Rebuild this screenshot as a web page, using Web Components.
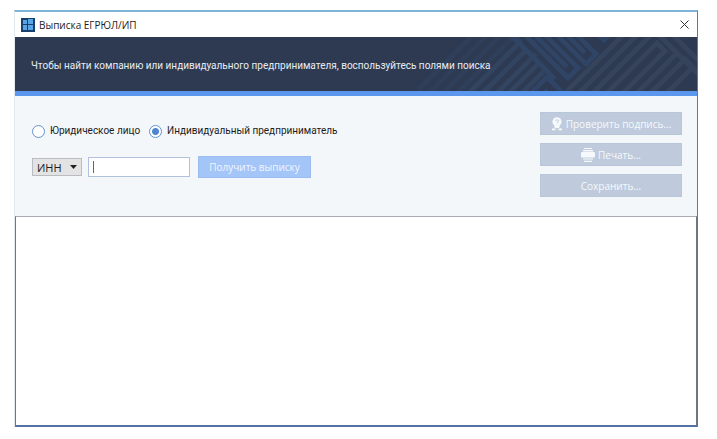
<!DOCTYPE html>
<html lang="ru">
<head>
<meta charset="utf-8">
<title>Выписка ЕГРЮЛ/ИП</title>
<style>
  body {
    margin: 0;
    padding: 10px 19px 12px 14px;
    box-sizing: border-box;
    height: 100vh;
    background: #fff;
    color: #1c1c1c;
    font: 10px/14px Roboto, "Open Sans", sans-serif;
  }
</style>
</head>
<body>
<app-window caption="Выписка ЕГРЮЛ/ИП">
  <hint-banner>Чтобы найти компанию или индивидуального предпринимателя, воспользуйтесь полями поиска</hint-banner>
  <search-panel>
    <action-button slot="actions" icon="seal">Проверить подпись...</action-button>
    <action-button slot="actions" icon="printer">Печать...</action-button>
    <action-button slot="actions">Сохранить...</action-button>
  </search-panel>
  <result-view></result-view>
</app-window>

<script>
(function () {
  const icons = {
    seal: `
      <svg width="12" height="14" viewBox="0 0 12 14" fill="#f6f9fc" aria-hidden="true">
        <circle cx="6" cy="4.8" r="4.6"/>
        <path d="M2.8 8.4h6.4L8 11H4z"/>
        <path d="M1 11.4h3.8l-.6 1.8H1zM7.2 11.4H11v1.8H7.8z"/>
        <path d="M4.4 3.6q1.6-1.6 2.9-.2.6 1.2-1.3 2.6" fill="none" stroke="#bfcbdc"/>
      </svg>`,
    printer: `
      <svg width="14" height="14" viewBox="0 0 14 14" fill="#f6f9fc" aria-hidden="true">
        <path d="M3 0h8v1H3zM2 2h10v1.4H2z"/>
        <rect y="4" width="14" height="5.6" rx="1"/>
        <path d="M2 10.4h10v1.2H2zM3 12.8h8V14H3z"/>
      </svg>`,
  };

  class AppWindow extends HTMLElement {
    constructor() {
      super();
      this.attachShadow({ mode: "open" });
    }

    connectedCallback() {
      this.shadowRoot.innerHTML = `
        <style>
          :host {
            display: flex;
            flex-direction: column;
            box-sizing: border-box;
            height: 100%;
            border: 1px solid #dfeaf3;
            border-top: 2px solid #7fb3da;
            border-right: 1px solid #4a7fb5;
            border-bottom: 0;
          }
          header {
            display: flex;
            align-items: center;
            gap: 4px;
            height: 25px;
            padding: 0 7px 0 6px;
            background: #fff;
          }
          h1 {
            flex: 1;
            margin: 0;
            font: 10px/14px "Open Sans", "Noto Sans", sans-serif;
          }
          button {
            display: flex;
            padding: 1px;
            border: 0;
            background: none;
          }
        </style>
        <header>
          <svg width="14" height="14" viewBox="0 0 14 14" aria-hidden="true">
            <path fill="#17406f" d="M0 0h14v14H0z"/>
            <path fill="#5ba4e6" d="M2 2h4v4H2zM7 1h5v5H7zM2 7h4v5H2zM7 7h5v5H7z"/>
          </svg>
          <h1>${this.getAttribute("caption")}</h1>
          <button type="button" aria-label="Закрыть">
            <svg width="9" height="9" viewBox="0 0 9 9" stroke="#333" aria-hidden="true">
              <path d="M.5.5l8 8M8.5.5l-8 8"/>
            </svg>
          </button>
        </header>
        <slot></slot>
      `;
    }
  }

  class HintBanner extends HTMLElement {
    constructor() {
      super();
      this.attachShadow({ mode: "open" }).innerHTML = `
        <style>
          :host {
            display: grid;
            align-items: center;
            height: 54px;
            border-bottom: 5px solid #5b97ec;
            background: #2d3a52;
            color: #e8ecf2;
          }
          p, svg {
            grid-area: 1 / 1;
          }
          p {
            z-index: 1;
            margin: 0;
            padding: 4px 16px 0;
          }
          svg {
            justify-self: end;
          }
        </style>
        <p><slot></slot></p>
        <svg width="280" height="54" viewBox="0 0 280 54" fill="none" stroke-width="5" aria-hidden="true">
          <g stroke="#303f59">
            <path d="M-4 58L58 -4M10 58L72 -4M24 58L86 -4M38 58L100 -4"/>
          </g>
          <g stroke="#32445f">
            <path d="M50 58L103 5L96 -2M64 58L110 12M78 58L119 17M90 58L122 26L133 37M103 58L127 34"/>
          </g>
          <g stroke="#304565">
            <path d="M92 -4L138 42M106 -4L151 41L161 31L126 -4M116 -4L150 30M138 -4L169 27L179 17L158 -4M148 -4L168 16M180 -4L187 3L194 -4M112 58L130 40L144 54L140 58M126 58L131 53"/>
          </g>
          <g stroke="#35435b">
            <path d="M146 58L208 -4M160 58L222 -4M174 58L236 -4M188 58L240 6L248 14L204 58M218 58L260 16M232 58L268 22L276 30L248 58M240 -4L284 40M254 -4L284 26"/>
          </g>
        </svg>
      `;
    }
  }

  class SearchPanel extends HTMLElement {
    constructor() {
      super();
      this.attachShadow({ mode: "open" }).innerHTML = `
        <style>
          :host {
            display: flex;
            justify-content: space-between;
            box-sizing: border-box;
            height: 120px;
            padding: 16px 15px 0 17px;
            background: #f3f7fa;
          }
          form {
            display: flex;
            flex-direction: column;
            gap: 18px;
            padding-top: 12px;
          }
          .row {
            display: flex;
            align-items: center;
            gap: 6px;
          }
          .kinds {
            gap: 9px;
          }
          label {
            display: flex;
            align-items: center;
            gap: 5px;
          }
          input[type="radio"] {
            appearance: none;
            box-sizing: border-box;
            width: 13px;
            height: 13px;
            margin: 0;
            border: 1px solid #5f93d2;
            border-radius: 50%;
            background: #fff;
          }
          input[type="radio"]:checked {
            background: radial-gradient(circle, #4f86d0 3px, #fff 4px);
          }
          .pick {
            display: grid;
            align-items: center;
            width: 50px;
          }
          .pick > * {
            grid-area: 1 / 1;
          }
          .pick svg {
            justify-self: end;
            margin-right: 5px;
            pointer-events: none;
          }
          select {
            appearance: none;
            box-sizing: border-box;
            width: 100%;
            height: 18px;
            padding: 0 4px;
            border: 1px solid #b9bcc1;
            border-radius: 0;
            background: #e3e3e3;
            color: inherit;
            font: 11px "Open Sans", "Noto Sans", sans-serif;
          }
          input[type="text"] {
            box-sizing: border-box;
            width: 102px;
            height: 20px;
            padding: 0 4px;
            border: 1px solid #b1c0dd;
            background: linear-gradient(#666, #666) 4px center / 1px 12px no-repeat #fff;
            color: inherit;
            font: inherit;
            outline: none;
          }
          button {
            width: 113px;
            height: 22px;
            margin-left: 2px;
            padding: 0;
            border: 1px solid #9bbcf0;
            background: #a4c5f8;
            color: #f0f6ff;
            font: 10px "Open Sans", "Noto Sans", sans-serif;
          }
          .actions {
            display: flex;
            flex-direction: column;
            gap: 8px;
            width: 142px;
          }
        </style>
        <form>
          <div class="row kinds">
            <label><input type="radio" name="kind">Юридическое лицо</label>
            <label><input type="radio" name="kind" checked>Индивидуальный предприниматель</label>
          </div>
          <div class="row">
            <div class="pick">
              <select aria-label="Поле поиска"><option>ИНН</option><option>ОГРН</option></select>
              <svg width="7" height="4" viewBox="0 0 7 4" aria-hidden="true"><path d="M0 0h7L3.5 4z" fill="#222"/></svg>
            </div>
            <input type="text" aria-label="Значение">
            <button type="button" disabled>Получить выписку</button>
          </div>
        </form>
        <div class="actions"><slot name="actions"></slot></div>
      `;
    }
  }

  class ActionButton extends HTMLElement {
    constructor() {
      super();
      this.attachShadow({ mode: "open" });
    }

    connectedCallback() {
      this.shadowRoot.innerHTML = `
        <style>
          :host {
            display: block;
          }
          button {
            display: flex;
            align-items: center;
            justify-content: center;
            gap: 3px;
            box-sizing: border-box;
            width: 100%;
            height: 23px;
            padding: 0;
            border: 1px solid #b8c6d9;
            background: #bfcbdc;
            color: #f6f9fc;
            font: 10px "Open Sans", "Noto Sans", sans-serif;
          }
        </style>
        <button type="button" disabled>${icons[this.getAttribute("icon")] || ""}<span><slot></slot></span></button>
      `;
    }
  }

  class ResultView extends HTMLElement {
    constructor() {
      super();
      this.attachShadow({ mode: "open" }).innerHTML = `
        <style>
          :host {
            display: block;
            flex: 1;
            border: 1px solid #6f7683;
            border-top-color: #a9adb3;
            border-bottom: 2px solid #5473a3;
            background: #fff;
          }
        </style>
      `;
    }
  }

  customElements.define("app-window", AppWindow);
  customElements.define("hint-banner", HintBanner);
  customElements.define("search-panel", SearchPanel);
  customElements.define("action-button", ActionButton);
  customElements.define("result-view", ResultView);
})();
</script>
</body>
</html>
